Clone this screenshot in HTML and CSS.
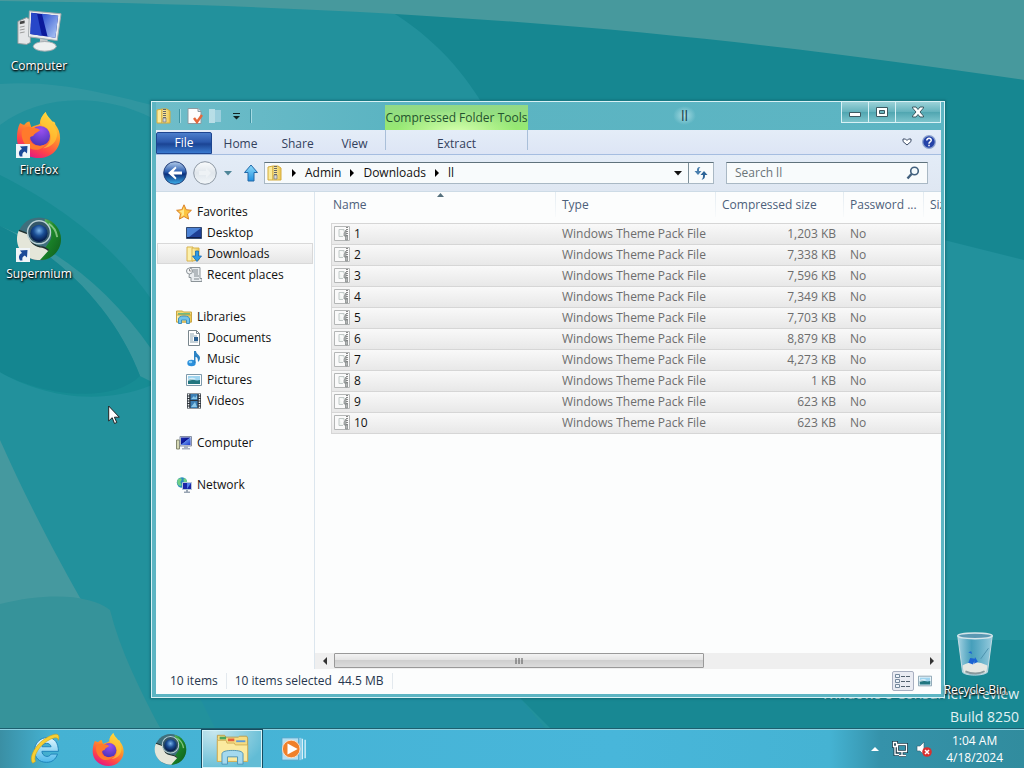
FILE: index.html
```html
<!DOCTYPE html>
<html lang="en">
<head>
<meta charset="utf-8">
<title>Desktop</title>
<link rel="stylesheet" href="styles.css">
</head>
<body>
<svg class="defs" aria-hidden="true">
  <defs>
    <linearGradient id="g-blue" x1="0" y1="0" x2="1" y2="1"><stop offset="0" stop-color="#1a2fb8"/><stop offset=".45" stop-color="#0a1390"/><stop offset=".5" stop-color="#5a86e8"/><stop offset="1" stop-color="#1c35c8"/></linearGradient>
    <linearGradient id="g-screen" x1="0" y1="0" x2="1" y2="1"><stop offset="0" stop-color="#2a50d0"/><stop offset="1" stop-color="#b4cdf6"/></linearGradient>
    <linearGradient id="g-folder" x1="0" y1="0" x2="1" y2="0"><stop offset="0" stop-color="#fdf3b4"/><stop offset="1" stop-color="#edc64f"/></linearGradient>
    <linearGradient id="g-fox" x1=".8" y1="0" x2=".3" y2="1"><stop offset="0" stop-color="#fff04a"/><stop offset=".4" stop-color="#ff9a2a"/><stop offset=".75" stop-color="#ff4647"/><stop offset="1" stop-color="#e31587"/></linearGradient>
    <radialGradient id="g-purple" cx=".55" cy=".2" r=".8"><stop offset="0" stop-color="#9a4ff0"/><stop offset="1" stop-color="#4a35b8"/></radialGradient>
    <radialGradient id="g-orb" cx=".5" cy=".35" r=".6"><stop offset="0" stop-color="#79b4ea"/><stop offset=".5" stop-color="#1b4f96"/><stop offset="1" stop-color="#061d4c"/></radialGradient>
    <linearGradient id="g-green" x1="0" y1="0" x2="1" y2="1"><stop offset="0" stop-color="#7fc873"/><stop offset=".4" stop-color="#1d8c2b"/><stop offset="1" stop-color="#0e5a1c"/></linearGradient>
    <linearGradient id="g-back" x1="0" y1="0" x2="0" y2="1"><stop offset="0" stop-color="#b5cdea"/><stop offset=".45" stop-color="#2a5db0"/><stop offset=".55" stop-color="#0a2f7c"/><stop offset="1" stop-color="#3fb4ee"/></linearGradient>
    <linearGradient id="g-fwd" x1="0" y1="0" x2="0" y2="1"><stop offset="0" stop-color="#fafcfd"/><stop offset=".5" stop-color="#e0e6ec"/><stop offset="1" stop-color="#f3f7fa"/></linearGradient>
    <linearGradient id="g-up" x1="0" y1="0" x2="0" y2="1"><stop offset="0" stop-color="#8fdcfb"/><stop offset="1" stop-color="#1f8fe0"/></linearGradient>
    <linearGradient id="g-ie" x1="0" y1="0" x2="0" y2="1"><stop offset="0" stop-color="#e2f7ff"/><stop offset="1" stop-color="#4cb8ea"/></linearGradient>
    <linearGradient id="g-bin" x1="0" y1="0" x2="1" y2="0"><stop offset="0" stop-color="#b8dcec" stop-opacity=".9"/><stop offset=".4" stop-color="#5aa9cc" stop-opacity=".7"/><stop offset="1" stop-color="#a6d3e6" stop-opacity=".9"/></linearGradient>

    <symbol id="i-computer" viewBox="0 0 48 48">
      <path d="M2 14l9-4 4 2v24l-4 2-9-1z" fill="#e4e6e8" stroke="#8f9799"/><path d="M4 14l5-1v3l-5 1z" fill="#444"/><path d="M4 20l5-1M4 23l5-1M4 26l5-1" stroke="#999"/>
      <path d="M14 3l33 3-4 28-30-4z" fill="#e9ecee" stroke="#a3a9ad"/><path d="M16 5l28 3-3 23-26-4z" fill="#0b1a9c"/><path d="M27 6l17 2-3 23-8-1z" fill="url(#g-screen)"/><path d="M16 5l6 1 5 23-12-2z" fill="#2747c8"/>
      <path d="M25 32l8 1v5l-8-1z" fill="#c4c8ca"/><ellipse cx="30" cy="40" rx="12" ry="5" fill="#eef0f0" stroke="#a3a9ad"/>
    </symbol>
    <symbol id="i-firefox" viewBox="0 0 48 48">
      <path d="M4 12c1-1 3 2 5 1 2-2 3-3 5-3l2 6c2-2 7-2 9-4 0-5 3-9 6-12 1 4 4 6 7 10 2 0 3 1 3 3 3 4 5 8 5 14 0 12-10 21-22 21S1 40 1 27c0-6 1-11 3-15z" fill="url(#g-fox)"/>
      <circle cx="25" cy="25" r="10.500" fill="url(#g-purple)"/>
      <path d="M6 20c4-5 8-6 11-3 3-1 6 0 8 2-2 2-6 3-7 6-4 0-5 4-2 7 4 4 11 4 15 1-3 6-10 8-16 5C9 35 5 28 6 20z" fill="#ff7a2c"/>
      <path d="M31 0c-4 4-7 9-4 14 4 1 8 4 9 10 1 8-4 12-8 14 9-1 15-7 15-16-2-9-11-12-12-22z" fill="#ffcc35" opacity=".65"/>
    </symbol>
    <symbol id="i-supermium" viewBox="0 0 48 48">
      <circle cx="24" cy="24" r="22.500" fill="#3f6f7c"/>
      <path d="M30 3c10 2 17 11 17 21 0 12-9 21-20 22-3 0-4-1-3-3l12-18c2-5 1-10-5-13z" fill="url(#g-green)"/>
      <path d="M34 8c5 3 8 8 9 14" fill="none" stroke="#a9dca2" stroke-width="2" opacity=".7"/>
      <path d="M3 15l11 4c0 7 4 12 11 13 5 0 7 2 9 4L25 46C11 46 1 36 1 24c0-4 1-7 2-9z" fill="#e4e6d9"/>
      <path d="M3 15l11 4c0 7 4 12 11 13 5 0 7 2 9 4" fill="none" stroke="#20302f" stroke-width="1.500"/>
      <circle cx="24" cy="17" r="12" fill="#345668" stroke="#b9cfd4" stroke-width="1.500"/><circle cx="24" cy="18" r="9" fill="url(#g-orb)"/>
    </symbol>
    <symbol id="i-shortcut" viewBox="0 0 14 14"><path d="M0 0h14v14H0z" fill="#f0f5f8"/><path d="M4 12.500C2 9 3 6.500 6 5L4 2.500 11.500 2 11 9.500 8.800 7.500C6.500 8.500 6 10 6.500 12.500z" fill="#1c4a98"/></symbol>
    <symbol id="i-bin" viewBox="0 0 40 48">
      <path d="M2 4l5 38c3 4 22 4 26 0l5-38z" fill="url(#g-bin)" stroke="#c5dbe3"/><ellipse cx="20" cy="4" rx="18" ry="3" fill="#5b98b2" stroke="#d5e5ea" stroke-width="1.500"/>
      <path d="M7 35c8-5 18-4 26 0l-1 7c-4 3-21 3-24 0z" fill="#e6e8e3"/><path d="M10 41c6 3 15 3 20 0" stroke="#88989c" stroke-width="2" fill="none"/>
      <path d="M15 27l5 1-2 6-5-2zM20 26l3 5-4 2zM13 21l3-1 1 3z" fill="#1b63d4"/><path d="M34 17l-8 11" stroke="#4c91ae"/>
    </symbol>
    <symbol id="i-zip" viewBox="0 0 16 16">
      <path d="M1 2l5-1v14H1z" fill="#fbeb9b" stroke="#d4ac3e"/><path d="M6 1h5l3 2v12H6z" fill="url(#g-folder)" stroke="#d4ac3e"/>
      <path d="M8.500 1v9" stroke="#666" stroke-width="3" stroke-dasharray="1 1"/><path d="M7 10h3v4H7z" fill="#d8d8d8" stroke="#777" stroke-width=".7"/>
    </symbol>
    <symbol id="i-props" viewBox="0 0 16 16"><path d="M1 .5h10l3 3v12H1z" fill="#fdfdfd" stroke="#8c9aa0"/><path d="M11 .5v3h3" fill="#dde" stroke="#8c9aa0"/><path d="M7 10l3 4 5-7" fill="none" stroke="#e5683b" stroke-width="2.500"/></symbol>
    <symbol id="i-star" viewBox="0 0 16 16"><path d="M8 .8l2.200 4.900 5.200.6-3.900 3.600 1.100 5.200L8 12.500l-4.600 2.600 1.100-5.200L.6 6.300l5.200-.6z" fill="#fdc43f" stroke="#d9822b"/><path d="M8 3v8l-3 2 1-4-3-2 4-1z" fill="#ffe88c"/></symbol>
    <symbol id="i-desktop" viewBox="0 0 16 16"><path d="M.5 2.500h15v11H.5z" fill="#1e3f94" stroke="#354b70"/><path d="M1 3h14L3 12H1z" fill="#4c83d6"/><path d="M1 12h14v1H1z" fill="#101d4a"/></symbol>
    <symbol id="i-downloads" viewBox="0 0 16 16"><path d="M1 1h6v14H1z" fill="#fcf0ac" stroke="#d8b24c"/><path d="M6 2h7v12l-7 1z" fill="url(#g-folder)" stroke="#d8b24c"/><path d="M9.500 5h3v5h3L11 15.500 6.500 10h3z" fill="#2e9be4" stroke="#146ab5" stroke-width=".8"/></symbol>
    <symbol id="i-recent" viewBox="0 0 16 16"><path d="M4 .5h10v11h2v3H5v-4H3z" fill="#e9edf0" stroke="#8c9499"/><path d="M7 3h5M7 5h5M8 7h4M8 9h5M8 12h5" stroke="#7e878d"/><circle cx="3.500" cy="4" r="3" fill="#f4f6f7" stroke="#8c9499"/><path d="M3.500 2v2h2" fill="none" stroke="#666" stroke-width=".7"/></symbol>
    <symbol id="i-libraries" viewBox="0 0 16 16"><path d="M.5 2h6l1 1h8v10H.5z" fill="#f5da74" stroke="#c9a745"/><path d="M2 4h12v3H2z" fill="#6fba82"/><path d="M.5 6h15v7H.5z" fill="url(#g-folder)" stroke="#c9a745"/><path d="M2.500 14.500V10c0-2 2-3 5.500-3s5.500 1 5.500 3v4.500h-3V11h-5v3.500z" fill="#73c3ea" stroke="#3f91bd"/></symbol>
    <symbol id="i-document" viewBox="0 0 16 16"><path d="M2.500.5h8l3 3v12h-11z" fill="#fff" stroke="#79868d"/><path d="M10.500.5v3h3" fill="none" stroke="#79868d"/><path d="M4 4h4M4 6h7M4 8h3M4 10h3M4 12h8" stroke="#8ca4b0"/><path d="M8 7h4v4H8z" fill="#2a5f91"/></symbol>
    <symbol id="i-music" viewBox="0 0 16 16"><ellipse cx="5.500" cy="12" rx="4.200" ry="3.300" fill="#2b8fdb"/><ellipse cx="4.500" cy="11" rx="1.800" ry="1.200" fill="#8ed1f6"/><path d="M8 12V0h2c0 3 4 4 4 7 0 2-1 3-2 4 0-4-1-5-2.500-5v6z" fill="#2c83c4"/></symbol>
    <symbol id="i-picture" viewBox="0 0 16 16"><path d="M.5 2.500h15v11H.5z" fill="#fafcfd" stroke="#7e9aab"/><path d="M2 4h12v8H2z" fill="#9ed4ef"/><path d="M2 8c4-3 6 2 12 0v4H2z" fill="#21757f"/><path d="M2 7c3-2 6-1 8 0l-8 2z" fill="#fff" opacity=".6"/></symbol>
    <symbol id="i-video" viewBox="0 0 16 16"><path d="M1 .5h14v15H1z" fill="#2b3138"/><path d="M2.500 1v14M13.500 1v14" stroke="#e8edf0" stroke-width="1.500" stroke-dasharray="1.500 1"/><path d="M4.500 1h7v6h-7zM4.500 8h7v7h-7z" fill="#3b7fb5"/><path d="M5 6l3-3 1 2 2-3v4zM5 14l4-5 2 5z" fill="#8cc8e8"/></symbol>
    <symbol id="i-pc" viewBox="0 0 16 16"><path d="M.5 5h3v9h-3z" fill="#d5d8b4" stroke="#83876f"/><path d="M4 1.500h11.500v9.500H4z" fill="#d8dde6" stroke="#8690a5"/><path d="M5 2.500h9.500V10H5z" fill="url(#g-blue)"/><path d="M8 11h4v2h2v1.500H6V13h2z" fill="#a9b1bf"/></symbol>
    <symbol id="i-network" viewBox="0 0 16 16"><circle cx="6" cy="5.500" r="5.200" fill="#2a8fbd"/><path d="M2 2c3-2 5 0 3 2s2 3 0 5C2 9 0 6 2 2zM8 1c3 1 4 4 2 5S7 3 8 1z" fill="#70cf87"/><path d="M6.500 5.500h9v7h-9z" fill="#1b26a8" stroke="#b9c7d6"/><path d="M11 6v6l4-6z" fill="#557ee8"/><path d="M10 13h2v1.500h2V16H8v-1.500h2z" fill="#99a5b3"/></symbol>
    <symbol id="i-theme" viewBox="0 0 16 16"><path d="M.5.500h15v14H.5z" fill="#fafafa" stroke="#b4b6b6"/><path d="M5 3.500h5v2M5 3.500v7h4" fill="#f0f5f2" stroke="#c2c9c8"/><path d="M13 1v9" stroke="#888" stroke-width="2" stroke-dasharray="1 1"/><path d="M10 7l2-3v6h-2zM11.500 10h2v4h-2z" fill="#b6b8b8" stroke="#808484" stroke-width=".7"/></symbol>
    <symbol id="i-ie" viewBox="0 0 36 36"><path d="M30 23c-2 6-6 9-12 9C10 32 5 27 5 19S11 5 19 5c8 0 12 6 12 15H13c0 5 7 8 10 3zM13 15h10c-1-5-9-5-10 0z" fill="url(#g-ie)" stroke="#1a80b8"/><path d="M3 33C-3 26 9 7 25 2c5-2 8 0 6 6-1-4-4-3-9-1C11 12 3 25 6 31z" fill="#f8cf33" stroke="#c79d19" stroke-width=".6"/></symbol>
    <symbol id="i-explorer" viewBox="0 0 36 36"><path d="M1.500 6V2.500h8l1 2h14l1-1h8l1 2V31h-33z" fill="#f6dc80" stroke="#b99b4c"/><path d="M4 4h7v3H4z" fill="#4ba55c"/><path d="M13 6h7v3h-7z" fill="#e4603e"/><path d="M22 8h10v2H22z" fill="#5e9bd8"/><path d="M1.500 8H11l1 3h8l1 2h13.500v18h-33z" fill="#fbea9f" stroke="#cfae56"/><path d="M6.500 34V23c0-3 5-4 11.500-4s11.500 1 11.500 4v11h-6v-8h-11v8z" fill="#a4d9ef" stroke="#4991b5"/></symbol>
    <symbol id="i-player" viewBox="0 0 30 28"><path d="M8 2h15v24H8z" fill="#8ecdea"/><path d="M24 3v22M27 4v20" stroke="#d8f0fa" stroke-width="1.500"/><path d="M2 2h18v24H2z" fill="#b4dff2" stroke="#4da3c9"/><circle cx="12" cy="14" r="9.500" fill="#f0802a" stroke="#fbe1cb"/><path d="M8 8l11 6-11 6z" fill="#fff"/></symbol>
  </defs>
</svg>

<main class="desktop">
  <svg class="wallpaper" viewBox="0 0 1024 768" preserveAspectRatio="none" aria-hidden="true">
    <rect width="1024" height="768" fill="#22919c"/>
    <path d="M370 0H1024V260L944 240V100H480C455 60 420 25 370 0z" fill="#168791"/>
    <path d="M0 0H1024V80C780 44 480 6 0 1z" fill="#47999d"/>
    <path d="M0 84C60 80 110 95 152 105V118C100 92 40 95 0 125z" fill="#3096a0"/>
    <path d="M0 175C50 200 110 240 152 300V385C90 410 30 390 0 372z" fill="#178c94"/>
    <path d="M0 226C60 255 115 310 140 376L152 382V350C110 290 60 250 0 226z" fill="#35959d"/>
    <path d="M0 226C60 255 115 310 140 376C110 405 40 395 0 372z" fill="#148690"/>
    <path d="M0 440C45 540 90 620 160 728H0z" fill="#45999f"/>
    <path d="M0 604C50 592 90 595 110 610C120 650 140 690 160 728H0z" fill="#36939a"/>
    <path d="M200 698H520L545 728H215z" fill="#208ea0"/>
    <path d="M520 698H944V640H1024V728H550z" fill="#188893"/>
  </svg>

  <p class="watermark">Windows 8 Consumer Preview<br>Build 8250</p>

  <a class="shortcut at-computer" href="#computer"><svg class="shortcut-icon"><use href="#i-computer"/></svg>Computer</a>
  <a class="shortcut at-firefox" href="#firefox"><svg class="shortcut-icon"><use href="#i-firefox"/></svg><svg class="shortcut-arrow"><use href="#i-shortcut"/></svg>Firefox</a>
  <a class="shortcut at-supermium" href="#supermium"><svg class="shortcut-icon"><use href="#i-supermium"/></svg><svg class="shortcut-arrow"><use href="#i-shortcut"/></svg>Supermium</a>
  <a class="shortcut at-bin" href="#bin"><svg class="shortcut-icon"><use href="#i-bin"/></svg>Recycle Bin</a>

  <section class="window" aria-label="ll">
    <header class="titlebar">
      <div class="quick">
        <svg class="icon"><use href="#i-zip"/></svg>
        <span class="quick-sep"></span>
        <button class="plain" aria-label="Properties"><svg class="icon"><use href="#i-props"/></svg></button>
        <button class="plain" aria-label="New folder"><svg class="icon" viewBox="0 0 16 16"><path d="M1 1h6v14H1z" fill="#d8edf4" opacity=".7"/><path d="M7 2h6v12H7z" fill="#a7d5e2" opacity=".8"/></svg></button>
        <button class="plain more" aria-label="Customize"><svg width="9" height="8" viewBox="0 0 9 8"><path d="M1 1.500h7" stroke="#122"/><path d="M1 4h7L4.500 7.500z" fill="#122"/></svg></button>
        <span class="quick-sep"></span>
      </div>
      <span class="context-title">Compressed Folder Tools</span>
      <h1 class="title"><span>ll</span></h1>
      <div class="controls">
        <button class="control" aria-label="Minimize"><svg width="14" height="12" viewBox="0 0 14 12"><path d="M1.500 6.500h11v4h-11z" fill="#fff" stroke="#3c5a62"/></svg></button>
        <button class="control" aria-label="Maximize"><svg width="14" height="12" viewBox="0 0 14 12"><path d="M1.500 1.500h11v9h-11z" fill="#fff" stroke="#3c5a62"/><path d="M4.500 4.500h5v3h-5z" fill="#6cb4be" stroke="#3c5a62"/></svg></button>
        <button class="control close" aria-label="Close"><svg width="14" height="12" viewBox="0 0 14 12"><path d="M1.500 1h3.500L7 3.500 9 1h3.500v1L9 6l3.500 4v1H9L7 8.500 5 11H1.500v-1L5 6 1.500 2z" fill="#fff" stroke="#3c5a62"/></svg></button>
      </div>
    </header>

    <div class="client">
      <nav class="ribbon" aria-label="Ribbon">
        <button class="tab file">File</button>
        <button class="tab">Home</button>
        <button class="tab">Share</button>
        <button class="tab">View</button>
        <button class="tab extract">Extract</button>
        <div class="ribbon-end">
          <button class="plain" aria-label="Expand the ribbon"><svg width="10" height="8" viewBox="0 0 10 8"><path d="M1 1h2.500L5 2.500 6.500 1H9v2.500L5 7 1 3.500z" fill="#fff" stroke="#3b4b66"/></svg></button>
          <button class="plain" aria-label="Help"><svg width="14" height="14" viewBox="0 0 14 14"><circle cx="7" cy="7" r="6.300" fill="#2442a8" stroke="#8ea4cf" stroke-width="1.200"/><path d="M4.800 5.500c0-3 4.700-2.800 4.400 0C9 7 7 7 7 8.700M7 9.700v1.600" fill="none" stroke="#fff" stroke-width="1.500"/></svg></button>
        </div>
      </nav>

      <div class="navbar">
        <button class="plain" aria-label="Back"><svg width="24" height="24" viewBox="0 0 24 24"><circle cx="12" cy="12" r="11.300" fill="url(#g-back)" stroke="#28427a"/><path d="M12.500 5.500L5 12l7.500 6.500L13.500 17l-3-3.500H19v-3h-8.500l3-3.500z" fill="#fff"/></svg></button>
        <button class="plain forward" aria-label="Forward"><svg width="24" height="24" viewBox="0 0 24 24"><circle cx="12" cy="12" r="11.300" fill="url(#g-fwd)" stroke="#8e99a5"/><path d="M6 10h7V7l5 5-5 5v-3H6z" fill="#eef2f5"/></svg></button>
        <button class="plain history" aria-label="Recent locations"><svg width="8" height="6" viewBox="0 0 8 6"><path d="M0 1h8L4 5.500z" fill="#4f8698"/></svg></button>
        <button class="plain up" aria-label="Up"><svg width="16" height="18" viewBox="0 0 16 18"><path d="M8 1l6.500 7.500H11V17H5V8.500H1.500z" fill="url(#g-up)" stroke="#2268a8"/></svg></button>
        <div class="address">
          <svg class="icon"><use href="#i-zip"/></svg>
          <svg class="chevron" viewBox="0 0 4 8"><path d="M0 0l4 4-4 4z"/></svg>
          <button class="crumb">Admin</button>
          <svg class="chevron" viewBox="0 0 4 8"><path d="M0 0l4 4-4 4z"/></svg>
          <button class="crumb">Downloads</button>
          <svg class="chevron" viewBox="0 0 4 8"><path d="M0 0l4 4-4 4z"/></svg>
          <button class="crumb">ll</button>
          <button class="plain drop" aria-label="Previous locations"><svg width="8" height="5" viewBox="0 0 8 5"><path d="M0 0h8L4 4.500z" fill="#111"/></svg></button>
          <button class="plain refresh" aria-label="Refresh"><svg width="14" height="14" viewBox="0 0 14 14"><path d="M6.500 1C3 1 3 3 3 5H.5L4 9l3.500-4H5C5 3 5 2 6.500 1z" fill="#4a7fae"/><path d="M7.500 13.500C11 13.500 11 11 11 9h2.500L10 5 6.500 9H9c0 2 0 3.500-1.500 4.500z" fill="#2d6498"/></svg></button>
        </div>
        <label class="search"><input type="text" placeholder="Search ll" aria-label="Search ll"><svg width="14" height="14" viewBox="0 0 14 14"><circle cx="8.500" cy="5" r="3.800" fill="#f4fafc" stroke="#42607d" stroke-width="1.600"/><path d="M5.500 8L1.500 12.500" stroke="#42607d" stroke-width="2.400"/></svg></label>
      </div>

      <div class="body">
        <nav class="tree" aria-label="Locations">
          <div class="group">
            <a class="node" href="#favorites"><svg class="icon"><use href="#i-star"/></svg>Favorites</a>
            <a class="node child" href="#desktop"><svg class="icon"><use href="#i-desktop"/></svg>Desktop</a>
            <a class="node child selected" href="#downloads"><svg class="icon"><use href="#i-downloads"/></svg>Downloads</a>
            <a class="node child" href="#recent"><svg class="icon"><use href="#i-recent"/></svg>Recent places</a>
          </div>
          <div class="group">
            <a class="node" href="#libraries"><svg class="icon"><use href="#i-libraries"/></svg>Libraries</a>
            <a class="node child" href="#documents"><svg class="icon"><use href="#i-document"/></svg>Documents</a>
            <a class="node child" href="#music"><svg class="icon"><use href="#i-music"/></svg>Music</a>
            <a class="node child" href="#pictures"><svg class="icon"><use href="#i-picture"/></svg>Pictures</a>
            <a class="node child" href="#videos"><svg class="icon"><use href="#i-video"/></svg>Videos</a>
          </div>
          <div class="group"><a class="node" href="#computer"><svg class="icon"><use href="#i-pc"/></svg>Computer</a></div>
          <div class="group"><a class="node" href="#network"><svg class="icon"><use href="#i-network"/></svg>Network</a></div>
        </nav>

        <div class="pane">
          <div class="list">
            <table class="files">
              <colgroup><col class="c-name"><col class="c-type"><col class="c-size"><col class="c-pass"><col class="c-full"></colgroup>
              <thead><tr><th class="sorted">Name<svg class="sort" viewBox="0 0 7 4"><path d="M0 4l3.500-4L7 4z" fill="#56707d"/></svg></th><th>Type</th><th>Compressed size</th><th>Password ...</th><th>Size</th></tr></thead>
              <tbody>
                <tr><td><svg class="icon"><use href="#i-theme"/></svg>1</td><td>Windows Theme Pack File</td><td>1,203 KB</td><td>No</td><td></td></tr>
                <tr><td><svg class="icon"><use href="#i-theme"/></svg>2</td><td>Windows Theme Pack File</td><td>7,338 KB</td><td>No</td><td></td></tr>
                <tr><td><svg class="icon"><use href="#i-theme"/></svg>3</td><td>Windows Theme Pack File</td><td>7,596 KB</td><td>No</td><td></td></tr>
                <tr><td><svg class="icon"><use href="#i-theme"/></svg>4</td><td>Windows Theme Pack File</td><td>7,349 KB</td><td>No</td><td></td></tr>
                <tr><td><svg class="icon"><use href="#i-theme"/></svg>5</td><td>Windows Theme Pack File</td><td>7,703 KB</td><td>No</td><td></td></tr>
                <tr><td><svg class="icon"><use href="#i-theme"/></svg>6</td><td>Windows Theme Pack File</td><td>8,879 KB</td><td>No</td><td></td></tr>
                <tr><td><svg class="icon"><use href="#i-theme"/></svg>7</td><td>Windows Theme Pack File</td><td>4,273 KB</td><td>No</td><td></td></tr>
                <tr><td><svg class="icon"><use href="#i-theme"/></svg>8</td><td>Windows Theme Pack File</td><td>1 KB</td><td>No</td><td></td></tr>
                <tr><td><svg class="icon"><use href="#i-theme"/></svg>9</td><td>Windows Theme Pack File</td><td>623 KB</td><td>No</td><td></td></tr>
                <tr><td><svg class="icon"><use href="#i-theme"/></svg>10</td><td>Windows Theme Pack File</td><td>623 KB</td><td>No</td><td></td></tr>
              </tbody>
            </table>
          </div>
          <div class="scrollbar">
            <button class="plain scroll-end" aria-label="Scroll left"><svg width="4" height="8" viewBox="0 0 4 8"><path d="M4 0v8L0 4z" fill="#333"/></svg></button>
            <div class="track"><div class="thumb"><svg width="8" height="6" viewBox="0 0 8 6"><path d="M1 0v6M4 0v6M7 0v6" stroke="#555"/></svg></div></div>
            <button class="plain scroll-end" aria-label="Scroll right"><svg width="4" height="8" viewBox="0 0 4 8"><path d="M0 0v8l4-4z" fill="#333"/></svg></button>
          </div>
        </div>
      </div>

      <footer class="status">
        <span class="status-item">10 items</span>
        <span class="status-item">10 items selected&nbsp; 44.5 MB</span>
        <div class="views">
          <button class="view active" aria-label="Details"><svg width="16" height="14" viewBox="0 0 16 14"><path d="M.5.500h4v3h-4zM.5 5.500h4v3h-4zM.5 10.500h4v3h-4z" fill="#eef4fa" stroke="#75889d"/><path d="M6 2.500h10M6 7.500h10M6 12.500h10" stroke="#52606e" stroke-dasharray="4 1"/></svg></button>
          <button class="view" aria-label="Large icons"><svg width="14" height="14" viewBox="0 0 16 16"><use href="#i-picture"/></svg></button>
        </div>
      </footer>
    </div>
  </section>

  <svg class="cursor" viewBox="0 0 12 20" aria-hidden="true"><path d="M.7 1v15l3.500-3.300L6.500 18.500l2.300-1-2.400-5.300h4.900z" fill="#fff" stroke="#222"/></svg>
</main>

<footer class="taskbar">
  <nav class="apps" aria-label="Taskbar">
    <button class="app" aria-label="Internet Explorer"><svg class="app-icon"><use href="#i-ie"/></svg></button>
    <button class="app" aria-label="Firefox"><svg class="app-icon"><use href="#i-firefox"/></svg></button>
    <button class="app" aria-label="Supermium"><svg class="app-icon"><use href="#i-supermium"/></svg></button>
    <button class="app running" aria-label="File Explorer"><svg class="app-icon"><use href="#i-explorer"/></svg></button>
    <button class="app" aria-label="Media Player"><svg class="app-icon small"><use href="#i-player"/></svg></button>
  </nav>
  <div class="tray">
    <button class="plain reveal" aria-label="Show hidden icons"><svg width="8" height="4" viewBox="0 0 8 4"><path d="M0 4l4-4 4 4z" fill="#fff"/></svg></button>
    <button class="plain" aria-label="Network"><svg width="16" height="16" viewBox="0 0 16 16"><path d="M5.500 3.500h9v7h-9zM10 11v3M7 14.500h7M1.500 1.500h3v4h-3zM3 6v7.500h4" fill="none" stroke="#1b3c4c" stroke-width="3"/><path d="M5.500 3.500h9v7h-9zM10 11v3M7 14.500h7M1.500 1.500h3v4h-3zM3 6v7.500h4" fill="none" stroke="#fff" stroke-width="1.300"/></svg></button>
    <button class="plain" aria-label="Volume muted"><svg width="16" height="16" viewBox="0 0 16 16"><path d="M1 5h3l4-4v13l-4-4H1z" fill="#fff" stroke="#345f70" stroke-width=".6"/><circle cx="11" cy="11" r="4.800" fill="#d8302f"/><path d="M9 9l4 4M13 9l-4 4" stroke="#fff" stroke-width="1.500"/></svg></button>
    <time class="clock">1:04 AM<br>4/18/2024</time>
  </div>
</footer>
</body>
</html>
```
FILE: styles.css
```css
* { box-sizing: border-box; }
html, body { height: 100%; }
body {
  margin: 0;
  display: flex;
  flex-direction: column;
  overflow: hidden;
  font: 12px/16px "Open Sans", "Noto Sans", sans-serif;
  color: #111;
}
button, input { font: inherit; color: inherit; }
a { color: inherit; text-decoration: none; }
svg { display: block; flex: none; }
.defs { position: absolute; width: 0; height: 0; }
.plain { display: flex; align-items: center; justify-content: center; padding: 0; border: 0; background: none; }
.icon { width: 16px; height: 16px; }

.desktop { position: relative; flex: 1; min-height: 0; overflow: hidden; background: #22919c; }
.wallpaper { position: absolute; top: 0; left: 0; width: 100%; height: 100vh; }
.watermark { position: absolute; right: 5px; bottom: 1px; margin: 0; text-align: right; font-size: 14px; line-height: 23px; color: #e2f1f3; }

.shortcut {
  position: absolute;
  left: 1px;
  width: 76px;
  display: flex;
  flex-direction: column;
  align-items: center;
  gap: 4px;
  color: #fff;
  text-shadow: 1px 1px 2px #000, 0 1px 2px #000;
}
.shortcut-icon { width: 46px; height: 46px; }
.shortcut-arrow { position: absolute; left: 15px; top: 32px; width: 14px; height: 14px; }
.at-computer { top: 8px; }
.at-firefox { top: 112px; }
.at-supermium { top: 216px; }
.at-bin { left: auto; right: 11px; bottom: 31px; z-index: 1; }

.window {
  position: absolute;
  inset: 101px 79px 31px 151px;
  display: flex;
  flex-direction: column;
  padding: 0 3px 3px 4px;
  border: 1px solid #d8f1f5;
  background: #5db5c3;
  box-shadow: 0 0 2px 1px rgba(10, 80, 90, .5);
}
.titlebar { display: flex; height: 28px; flex: none; background: linear-gradient(90deg, #6fbdc9, #5bb4c2 30%, #5db5c3); }
.quick { width: 229px; display: flex; align-items: center; gap: 5px; }
.quick-sep { width: 1px; height: 14px; margin: 0 2px; background: #3e93a3; box-shadow: 1px 0 #a5dbe3; }
.more { width: 14px; }
.context-title {
  width: 143px;
  margin-top: 3px;
  text-align: center;
  line-height: 25px;
  color: #23522f;
  white-space: nowrap;
  background: radial-gradient(ellipse at 50% 110%, #d6ffb0, transparent 60%), linear-gradient(#92d987, #97ea71);
}
.title { flex: 1; margin: 0; text-align: center; font-size: 14px; font-weight: 400; line-height: 28px; color: #173f4a; }
.title span { padding: 0 8px; background: radial-gradient(#a8dbe3, transparent 70%); }
.controls { display: flex; align-self: flex-start; border: solid #d8f1f5; border-width: 0 1px 1px; }
.control {
  width: 27px;
  height: 20px;
  display: flex;
  align-items: center;
  justify-content: center;
  padding: 0;
  border: 0;
  border-right: 1px solid #d8f1f5;
  background: linear-gradient(#9bd2d8, #63b2bc 50%, #4fa5b0 50%, #7cc4cc);
}
.close { width: 44px; border-right: 0; }

.client { flex: 1; min-height: 0; display: flex; flex-direction: column; background: #fcfdfd; }
.ribbon { display: flex; height: 25px; flex: none; border-bottom: 1px solid #a5bde0; background: linear-gradient(#e4edf8, #dde5f5); }
.tab { width: 57px; padding: 4px 0 0; border: 0; background: none; color: #33415c; line-height: 20px; }
.file { width: 56px; margin-top: 2px; padding: 0; border: 1px solid #1d4590; border-radius: 2px 2px 0 0; color: #fff; background: linear-gradient(#4c7fcc, #2a58ac 45%, #1b4494 55%, #3a7bd0); }
.extract { width: 143px; height: 20px; margin-left: 2px; line-height: 16px; padding-top: 6px; border: solid #a9bfd9; border-width: 0 1px; }
.ribbon-end { margin-left: auto; display: flex; align-items: center; gap: 10px; padding-right: 5px; }

.navbar { display: flex; align-items: center; height: 37px; flex: none; padding: 0 13px 0 7px; border-bottom: 1px solid #cddbe6; background: linear-gradient(#e3ecf7, #dfe7f2); }
.forward { margin-left: 6px; }
.history { margin-left: 7px; }
.up { margin: 0 5px 0 11px; }
.address, .search { display: flex; align-items: center; height: 22px; border: 1px solid #a9b8c4; border-top-color: #5f727c; background: #f8fbfc; }
.address { flex: 1; gap: 9px; padding-left: 2px; }
.chevron { width: 4px; height: 8px; }
.crumb { padding: 0; border: 0; background: none; }
.drop { margin-left: auto; width: 12px; }
.refresh { width: 25px; height: 100%; margin-left: -5px; border-left: 1px solid #7d8f99; }
.search { width: 202px; margin-left: 12px; padding: 0 7px 0 8px; }
.search input { flex: 1; min-width: 0; padding: 0; border: 0; outline: 0; background: none; }
.search input::placeholder { color: #6a7479; opacity: 1; }

.body { flex: 1; min-height: 0; display: flex; }
.tree { width: 159px; flex: none; display: flex; flex-direction: column; gap: 21px; padding: 9px 1px 0; border-right: 1px solid #dce6ee; }
.node { display: flex; align-items: center; gap: 5px; height: 21px; padding-left: 18px; border: 1px solid transparent; white-space: nowrap; }
.child { padding-left: 28px; }
.selected { border-color: #d9d9d9; background: linear-gradient(#f9f9f9, #e6e6e6); }

.pane { flex: 1; min-width: 0; display: flex; flex-direction: column; }
.list { flex: 1; min-height: 0; overflow: hidden; padding-left: 16px; }
.files { width: 100%; min-width: 673px; table-layout: fixed; border-spacing: 0; }
.c-name { width: 225px; }
.c-type { width: 160px; }
.c-size { width: 128px; }
.c-pass { width: 80px; }
.files th { height: 31px; padding: 5px 0 0 6px; text-align: left; vertical-align: top; font-weight: 400; color: #4c607a; white-space: nowrap; background: linear-gradient(#e3ebf1, #f8fafb) right top / 1px 25px no-repeat; }
.files th:first-child { padding-left: 2px; }
.sorted { position: relative; }
.sort { position: absolute; top: 1px; left: 106px; width: 7px; height: 4px; }
.files td { height: 21px; padding: 0 8px 0 6px; color: #6d6d6d; white-space: nowrap; border-top: 1px solid #d6d6d6; background: linear-gradient(#f9f9f9, #e8e8e8); }
.files tr:last-child td { height: 22px; border-bottom: 1px solid #d6d6d6; }
.files td:first-child { display: flex; align-items: center; gap: 4px; padding: 0 2px; color: #111; border-left: 1px solid #d6d6d6; }
.files td:nth-child(3) { text-align: right; }

.scrollbar { display: flex; height: 16px; flex: none; background: #efefef; }
.scroll-end { width: 19px; }
.track { flex: 1; }
.thumb { width: 63%; height: 15px; display: flex; align-items: center; justify-content: center; border: 1px solid #999; border-radius: 1px; background: linear-gradient(#f3f3f3, #e2e2e2 50%, #cfcfcf 50%, #dcdcdc); }

.status { display: flex; align-items: center; height: 25px; flex: none; padding: 0 5px 2px 14px; color: #26374e; }
.status-item { padding-right: 8px; margin-right: 8px; border-right: 1px solid #e3e9ee; }
.views { margin-left: auto; display: flex; }
.view { width: 22px; height: 20px; display: flex; align-items: center; justify-content: center; padding: 0; border: 1px solid transparent; border-radius: 2px; background: none; }
.active { border-color: #a8afc0; background: #e9ebf2; }

.cursor { position: absolute; left: 108px; top: 405px; width: 12px; height: 20px; }

.taskbar {
  position: relative;
  display: flex;
  justify-content: space-between;
  height: 39px;
  flex: none;
  border-top: 1px solid #8fd2e2;
  box-shadow: 0 -1px #1d5f6f;
  background: linear-gradient(90deg, #3a8fa4, #45b2d3 5%, #48b6da 60%, #45b3d3 81%, #3592aa 86%, #318c9e);
}
.apps { display: flex; align-items: stretch; padding-left: 16px; gap: 2px; }
.app { width: 60px; display: flex; align-items: center; justify-content: center; padding: 0; border: 1px solid transparent; background: none; }
.running { border-color: #d5f3fa; outline: 1px solid #164c60; background: radial-gradient(ellipse at 20% 0, #c8e7ee, transparent 80%), #62bcd5; }
.app-icon { width: 33px; height: 33px; }
.small { width: 28px; height: 26px; }
.tray { display: flex; align-items: center; gap: 8px; padding-right: 21px; }
.reveal { margin-right: 5px; }
.clock { margin-left: 6px; text-align: center; color: #fff; line-height: 17px; }
```
